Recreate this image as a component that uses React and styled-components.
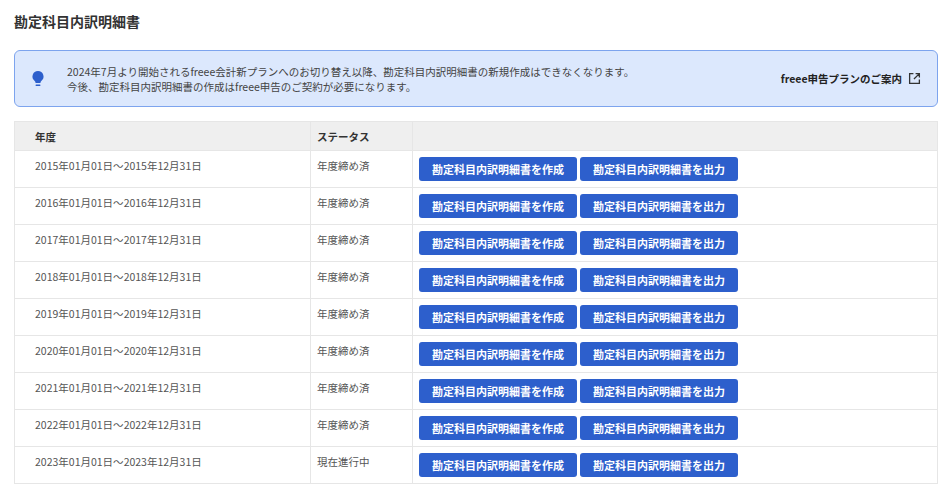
import React from "react";
import styled, { createGlobalStyle } from "styled-components";

const Global = createGlobalStyle`
  body { margin: 0; background: #fff; font-family: "Noto Sans CJK JP", "Noto Sans", sans-serif; color: #323232; }
`;
const Page = styled.div` padding: 10px 14px 0 14px; `;
const Title = styled.h1` margin: 0 0 18px; font-size: 14px; font-weight: 700; line-height: 22px; color: #323232; `;
const Banner = styled.div`
  display: flex; align-items: center; height: 57px; box-sizing: border-box;
  background: #dce8fd; border: 1px solid #7da4ee; border-radius: 6px; padding: 0 16px 0 16px;
`;
const BannerText = styled.div` flex: 1; margin-left: 22px; font-size: 10.5px; line-height: 15px; color: #444; `;
const BannerLink = styled.div` display: flex; align-items: center; gap: 6px; font-size: 10.5px; font-weight: 700; color: #222; `;
const Table = styled.div` margin-top: 14px; border: 1px solid #e6e6e6; border-bottom: none; `;
const Row = styled.div`
  display: grid; grid-template-columns: 296px 102px 1fr; height: ${p => p.$h}px;
  background: ${p => p.$head ? "#efefef" : "#fff"}; border-bottom: 1px solid #e6e6e6; box-sizing: border-box;
`;
const Cell = styled.div`
  display: flex; align-items: ${p => p.$center ? "center" : "flex-start"}; gap: 3px;
  padding: ${p => p.$pad}; font-size: 10.5px; color: ${p => p.$head ? "#333" : "#555"};
  font-weight: ${p => p.$head ? 700 : 400}; border-right: ${p => p.$last ? "none" : "1px solid #e6e6e6"};
`;
const Btn = styled.button`
  width: 158px; height: 24px; border: none; border-radius: 3px; background: #2d5fcc; color: #fff;
  font-family: inherit; font-size: 11px; font-weight: 700; padding: 0;
`;
const rows = [2015,2016,2017,2018,2019,2020,2021,2022,2023];
export default function App() {
  return (<><Global /><Page>
    <Title>勘定科目内訳明細書</Title>
    <Banner>
      <svg width="14" height="18" viewBox="0 0 14 18"><path d="M7 1a5.5 5.5 0 0 0-3.3 9.9c.5.4.8 1 .8 1.6V13h5v-.5c0-.6.3-1.2.8-1.6A5.5 5.5 0 0 0 7 1z" fill="#2d5fcc"/><rect x="4.5" y="14.5" width="5" height="1.4" rx=".7" fill="#2d5fcc"/></svg>
      <BannerText>2024年7月より開始されるfreee会計新プランへのお切り替え以降、勘定科目内訳明細書の新規作成はできなくなります。<br/>今後、勘定科目内訳明細書の作成はfreee申告のご契約が必要になります。</BannerText>
      <BannerLink>freee申告プランのご案内
        <svg width="13" height="13" viewBox="0 0 12 12" fill="none" stroke="#333" strokeWidth="1.2"><path d="M5 1.5H1.5v9h9V7M7 1.5h3.5V5M10.5 1.5 5.5 6.5"/></svg>
      </BannerLink>
    </Banner>
    <Table>
      <Row $head $h={29}><Cell $head $center $pad="0 20px">年度</Cell><Cell $head $center $pad="0 6px">ステータス</Cell><Cell $last /></Row>
      {rows.map(y => (
        <Row key={y} $h={37}>
          <Cell $pad="7px 20px">{y}年01月01日〜{y}年12月31日</Cell>
          <Cell $pad="7px 6px">{y === 2023 ? "現在進行中" : "年度締め済"}</Cell>
          <Cell $last $pad="6px 6px"><Btn>勘定科目内訳明細書を作成</Btn><Btn>勘定科目内訳明細書を出力</Btn></Cell>
        </Row>
      ))}
    </Table>
  </Page></>);
}
